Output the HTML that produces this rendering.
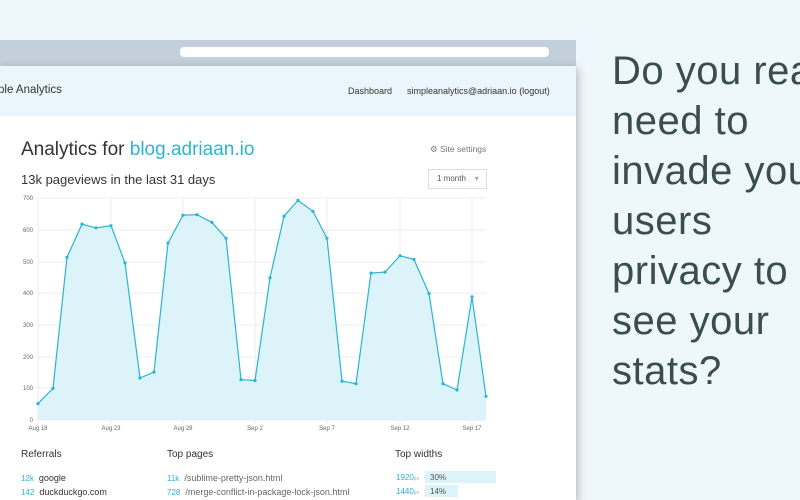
<!DOCTYPE html>
<html><head><style>
html,body{margin:0;width:800px;height:500px;overflow:hidden}
body{background:#eef7fc;font-family:"Liberation Sans",sans-serif;position:relative}
.a{position:absolute;white-space:nowrap}
.clip{position:absolute;left:612px;top:46px;width:188px;height:360px;overflow:hidden}
.big{font-size:40px;color:#3a4e4e;line-height:50px;letter-spacing:0.5px;white-space:nowrap}
.sm{font-size:9px;color:#333}
.c{color:#2bb5d2}
</style></head><body>
<div class="a" style="left:0;top:40px;width:576px;height:26px;background:#c3d0db"></div>
<div class="a" style="left:180px;top:47px;width:369px;height:10px;background:#fff;border-radius:4px"></div>
<div class="a" style="left:0;top:66px;width:576px;height:434px;background:#fff;box-shadow:2px 2px 8px rgba(0,0,0,.25)"></div>
<div class="a" style="left:0;top:66px;width:576px;height:50px;background:#ebf6fc"></div>
<div class="a" style="left:-2px;top:84px;font-size:11.5px;color:#333">ple Analytics</div>
<div class="a sm" style="left:348px;top:86px">Dashboard</div>
<div class="a sm" style="left:407px;top:86px">simpleanalytics@adriaan.io (logout)</div>
<div class="a" style="left:21px;top:139px;font-size:19px;color:#333">Analytics for <span class="c">blog.adriaan.io</span></div>
<div class="a" style="left:430px;top:144px;font-size:8.5px;color:#777">⚙ Site settings</div>
<div class="a" style="left:21px;top:172px;font-size:13px;color:#333">13k pageviews in the last 31 days</div>
<div class="a" style="left:428px;top:169px;width:57px;height:18px;border:1px solid #ddd;font-size:8px;color:#555;line-height:18px;text-indent:8px">1 month &nbsp;&nbsp;&nbsp;<span style="color:#aaa">▾</span></div>
<svg class="a" style="left:0;top:0" width="576" height="500">
<g stroke="#eee" stroke-width="1">
<line x1="38" x2="486" y1="198" y2="198"/><line x1="38" x2="486" y1="230" y2="230"/><line x1="38" x2="486" y1="262" y2="262"/><line x1="38" x2="486" y1="293" y2="293"/><line x1="38" x2="486" y1="325" y2="325"/><line x1="38" x2="486" y1="357" y2="357"/><line x1="38" x2="486" y1="388" y2="388"/><line x1="38" x2="486" y1="420" y2="420"/>
<line x1="38" x2="38" y1="198" y2="424"/><line x1="111" x2="111" y1="198" y2="424"/><line x1="183" x2="183" y1="198" y2="424"/><line x1="255" x2="255" y1="198" y2="424"/><line x1="327" x2="327" y1="198" y2="424"/><line x1="400" x2="400" y1="198" y2="424"/><line x1="472" x2="472" y1="198" y2="424"/>
</g>
<g font-size="6" fill="#666" font-family="Liberation Sans" text-anchor="end">
<text x="33" y="200">700</text><text x="33" y="232">600</text><text x="33" y="264">500</text><text x="33" y="295">400</text><text x="33" y="327">300</text><text x="33" y="359">200</text><text x="33" y="390">100</text><text x="33" y="422">0</text>
</g>
<g font-size="6" fill="#666" font-family="Liberation Sans" text-anchor="middle">
<text x="38" y="430">Aug 18</text><text x="111" y="430">Aug 23</text><text x="183" y="430">Aug 28</text><text x="255" y="430">Sep 2</text><text x="327" y="430">Sep 7</text><text x="400" y="430">Sep 12</text><text x="472" y="430">Sep 17</text>
</g>
<polygon fill="#dbf3f9" points="38,420 38,403.6 53,388.4 67,257.3 82,224.1 96,227.9 111,225.7 125,262.9 140,378 154,372 168,243 183,215.2 197,214.6 212,222.5 226,238.3 241,379.6 255,380.5 270,277.8 284,216.2 298,200.4 313,211.4 327,238.3 342,381.1 356,383.7 371,273.1 385,272.1 400,255.7 414,259.5 429,293.6 443,383.7 457,390 472,296.8 486,396.3 486,420"/>
<polyline fill="none" stroke="#2bb5d2" stroke-width="1.2" points="38,403.6 53,388.4 67,257.3 82,224.1 96,227.9 111,225.7 125,262.9 140,378 154,372 168,243 183,215.2 197,214.6 212,222.5 226,238.3 241,379.6 255,380.5 270,277.8 284,216.2 298,200.4 313,211.4 327,238.3 342,381.1 356,383.7 371,273.1 385,272.1 400,255.7 414,259.5 429,293.6 443,383.7 457,390 472,296.8 486,396.3"/>
<g fill="#2bb5d2">
<circle cx="38" cy="403.6" r="1.6"/><circle cx="53" cy="388.4" r="1.6"/><circle cx="67" cy="257.3" r="1.6"/><circle cx="82" cy="224.1" r="1.6"/><circle cx="96" cy="227.9" r="1.6"/><circle cx="111" cy="225.7" r="1.6"/><circle cx="125" cy="262.9" r="1.6"/><circle cx="140" cy="378" r="1.6"/><circle cx="154" cy="372" r="1.6"/><circle cx="168" cy="243" r="1.6"/><circle cx="183" cy="215.2" r="1.6"/><circle cx="197" cy="214.6" r="1.6"/><circle cx="212" cy="222.5" r="1.6"/><circle cx="226" cy="238.3" r="1.6"/><circle cx="241" cy="379.6" r="1.6"/><circle cx="255" cy="380.5" r="1.6"/><circle cx="270" cy="277.8" r="1.6"/><circle cx="284" cy="216.2" r="1.6"/><circle cx="298" cy="200.4" r="1.6"/><circle cx="313" cy="211.4" r="1.6"/><circle cx="327" cy="238.3" r="1.6"/><circle cx="342" cy="381.1" r="1.6"/><circle cx="356" cy="383.7" r="1.6"/><circle cx="371" cy="273.1" r="1.6"/><circle cx="385" cy="272.1" r="1.6"/><circle cx="400" cy="255.7" r="1.6"/><circle cx="414" cy="259.5" r="1.6"/><circle cx="429" cy="293.6" r="1.6"/><circle cx="443" cy="383.7" r="1.6"/><circle cx="457" cy="390" r="1.6"/><circle cx="472" cy="296.8" r="1.6"/><circle cx="486" cy="396.3" r="1.6"/>
</g>
</svg>
<div class="a" style="left:21px;top:449px;font-size:10px;color:#333">Referrals</div>
<div class="a" style="left:167px;top:449px;font-size:10px;color:#333">Top pages</div>
<div class="a" style="left:395px;top:449px;font-size:10px;color:#333">Top widths</div>
<div class="a sm" style="left:21px;top:473px"><span class="c" style="font-size:8px">12k</span>&nbsp; google</div>
<div class="a sm" style="left:21px;top:487px"><span class="c" style="font-size:8px">142</span>&nbsp; duckduckgo.com</div>
<div class="a sm" style="left:167px;top:473px;color:#666"><span class="c" style="font-size:8px">11k</span>&nbsp; /sublime-pretty-json.html</div>
<div class="a sm" style="left:167px;top:487px;color:#666"><span class="c" style="font-size:8px">728</span>&nbsp; /merge-conflict-in-package-lock-json.html</div>
<div class="a" style="left:425px;top:471px;width:71px;height:12px;background:#dbf3f9"></div>
<div class="a" style="left:425px;top:485px;width:33px;height:12px;background:#dbf3f9"></div>
<div class="a" style="left:396px;top:473px;font-size:8px" ><span class="c">1920</span><span style="color:#aaa;font-size:5px">px</span></div>
<div class="a" style="left:396px;top:487px;font-size:8px" ><span class="c">1440</span><span style="color:#aaa;font-size:5px">px</span></div>
<div class="a" style="left:430px;top:473px;font-size:8px;color:#555">30%</div>
<div class="a" style="left:430px;top:487px;font-size:8px;color:#555">14%</div>
<div class="clip"><div class="big">Do you really<br>need to<br>invade your<br>users<br>privacy to<br>see your<br>stats?</div></div>
</body></html>
